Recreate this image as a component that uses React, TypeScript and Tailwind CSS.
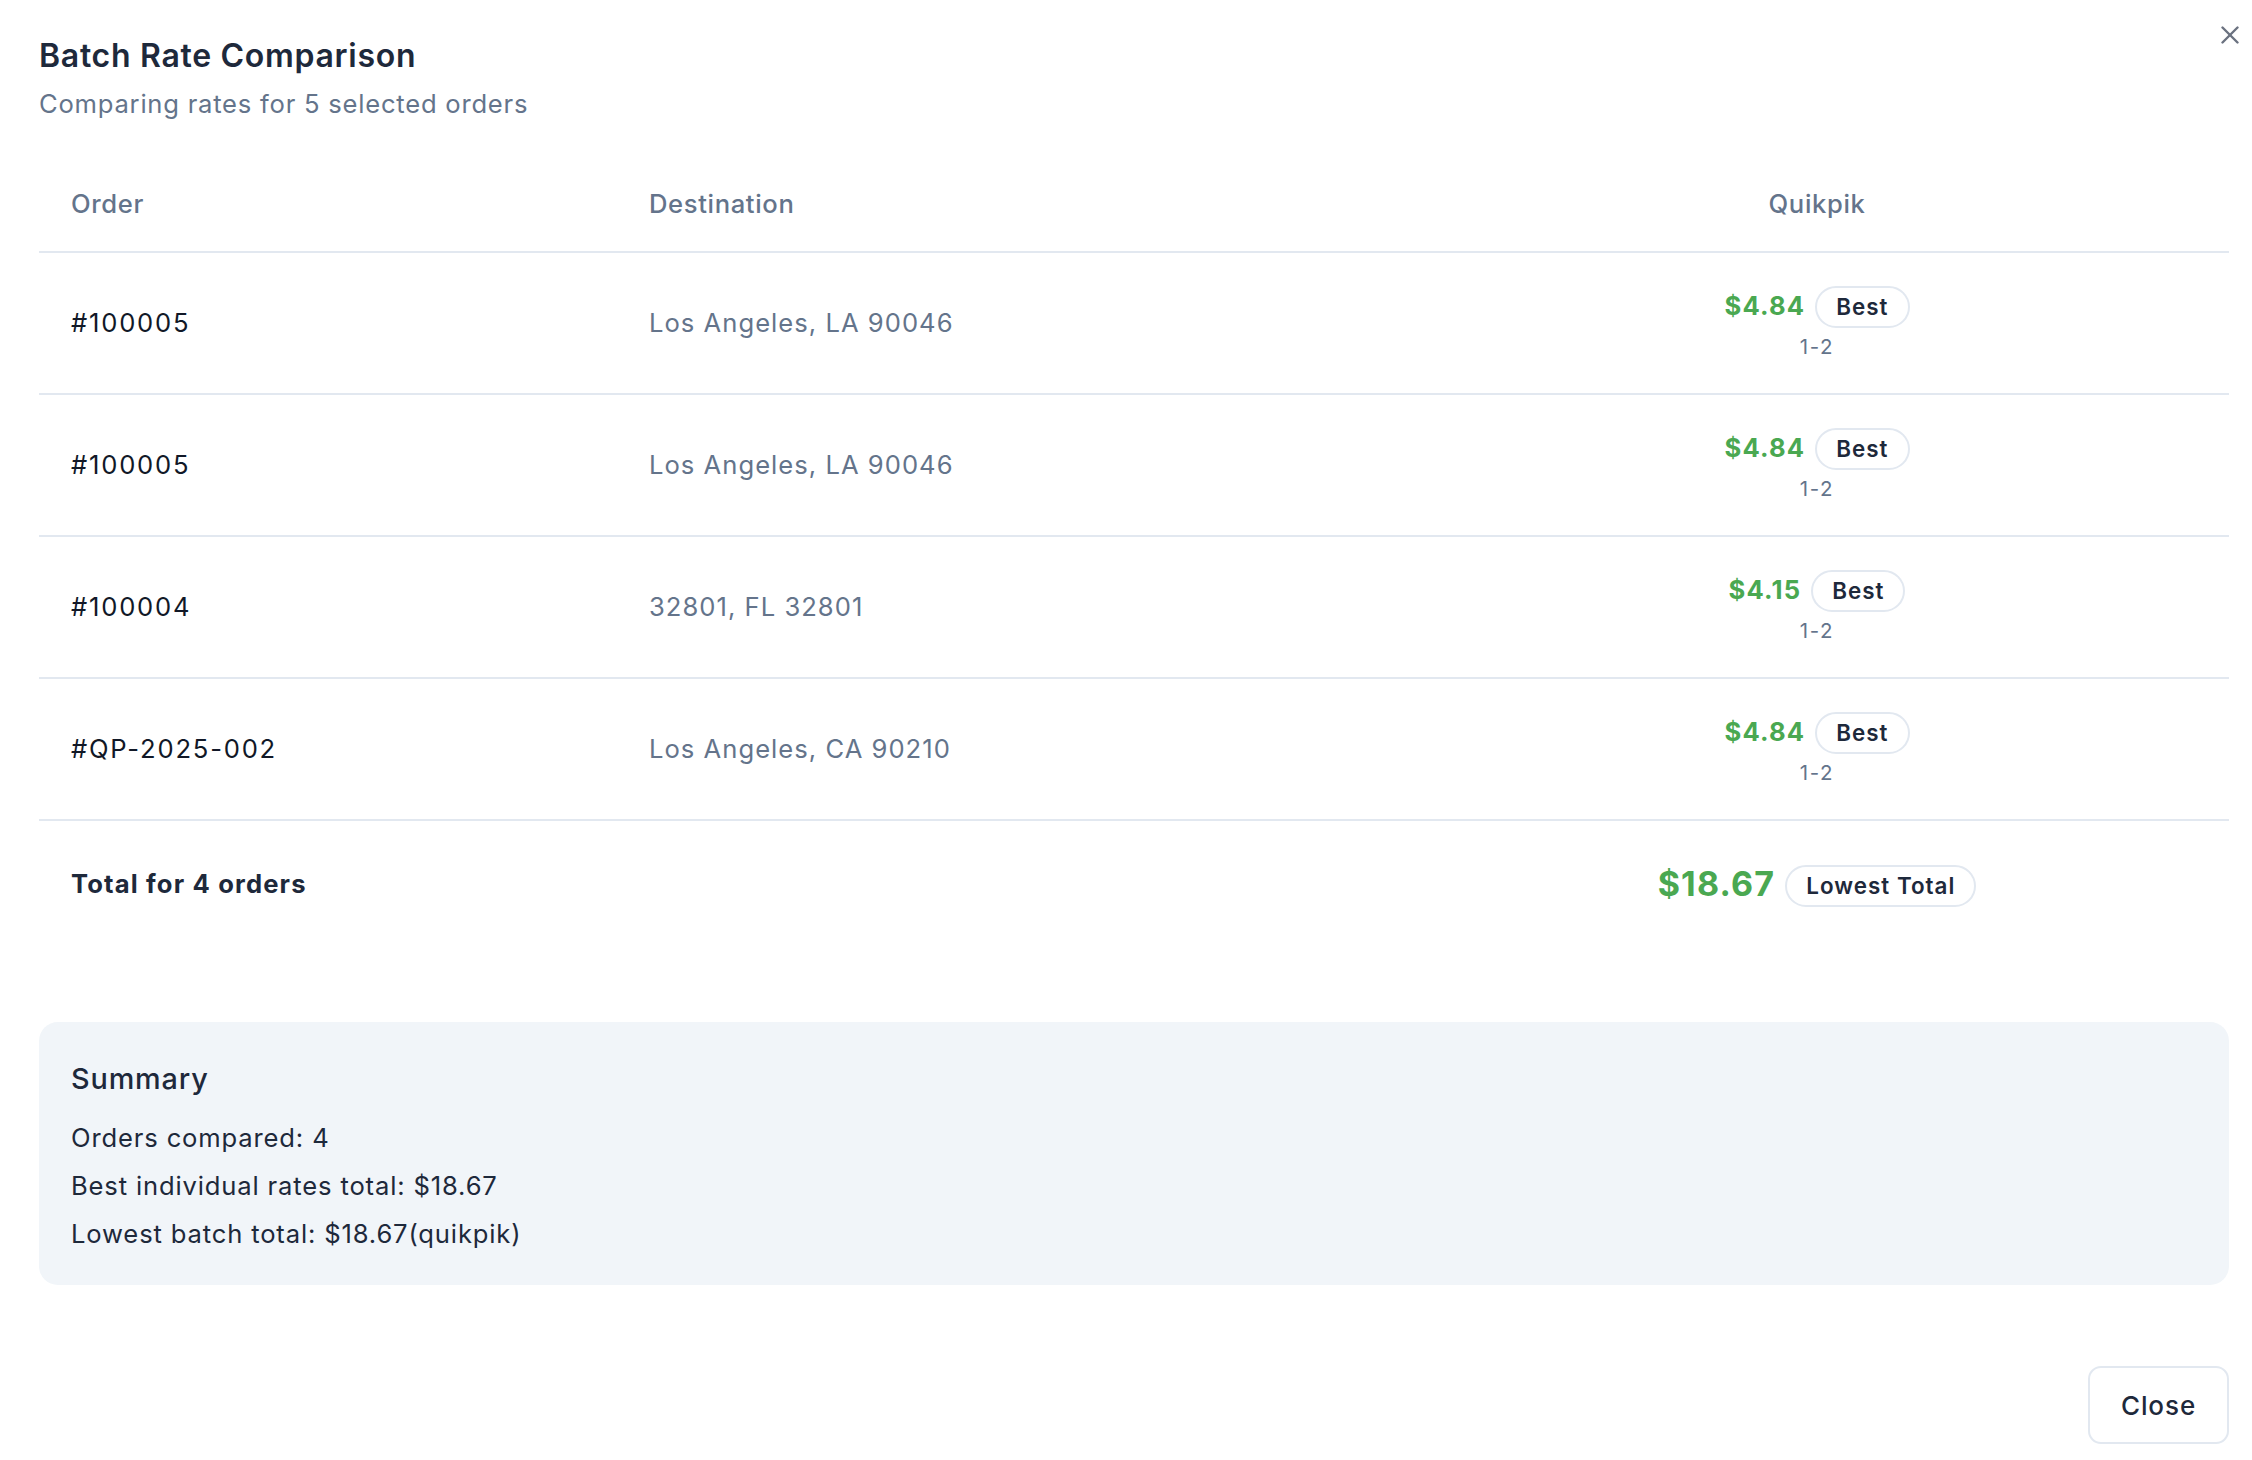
import React from "react";

type Row = { order: string; dest: string; price: string };

const rows: Row[] = [
  { order: "#100005", dest: "Los Angeles, LA 90046", price: "$4.84" },
  { order: "#100005", dest: "Los Angeles, LA 90046", price: "$4.84" },
  { order: "#100004", dest: "32801, FL 32801", price: "$4.15" },
  { order: "#QP-2025-002", dest: "Los Angeles, CA 90210", price: "$4.84" },
];

function Badge({ children }: { children: React.ReactNode }) {
  return (
    <span className="inline-flex h-[42px] items-center rounded-full border-2 border-[#e2e8f0] px-[19px] text-[22.4px] font-semibold tracking-[0.045em] text-[#1e293b]">
      {children}
    </span>
  );
}

export default function App() {
  return (
    <div className="relative flex h-[1460px] w-[2252px] flex-col bg-white pl-[39px] pr-[23px] pt-[32px] font-['Inter','Noto_Sans',sans-serif] tracking-[0.04em] text-[#1e293b]">
      <button className="absolute right-[13px] top-[26px] h-[18px] w-[18px] text-[#6b7280]" aria-label="Close">
        <svg viewBox="0 0 18 18" width="18" height="18" fill="none" stroke="currentColor" strokeWidth="2.4" strokeLinecap="round">
          <path d="M1.5 1.5 L16.5 16.5" />
          <path d="M16.5 1.5 L1.5 16.5" />
        </svg>
      </button>

      <h1 className="h-[48px] text-[32px] font-semibold leading-[48px] tracking-[0.022em] text-[#1e293b]">
        Batch Rate Comparison
      </h1>
      <p className="mt-[5px] h-[38px] text-[25.6px] leading-[38px] tracking-[0.03em] text-[#64748b]">
        Comparing rates for 5 selected orders
      </p>

      <div className="mt-[34px] w-[2190px]">
        <div className="grid h-[96px] grid-cols-[578px_788px_824px] items-center border-b-2 border-[#e2e8f0] text-[25.6px] font-medium text-[#64748b]">
          <div className="pl-[32px]">Order</div>
          <div className="pl-[32px]">Destination</div>
          <div className="text-center">Quikpik</div>
        </div>
        {rows.map((r, i) => (
          <div
            key={i}
            className="grid h-[142px] grid-cols-[578px_788px_824px] items-center border-b-2 border-[#e2e8f0] text-[25.6px]"
          >
            <div className="pl-[32px] font-normal tracking-[0.07em] text-[#111827]">{r.order}</div>
            <div className="pl-[32px] tracking-[0.04em] text-[#64748b]">{r.dest}</div>
            <div className="flex flex-col items-center">
              <div className="flex h-[42px] items-center gap-[10px]">
                <span className="text-[25.6px] font-bold tracking-[0.045em] text-[#4aa851]">{r.price}</span>
                <Badge>Best</Badge>
              </div>
              <div className="mt-[5px] h-[28px] text-[20.5px] leading-[28px] tracking-[0.08em] text-[#64748b]">1-2</div>
            </div>
          </div>
        ))}
        <div className="grid h-[126px] grid-cols-[578px_788px_824px] items-center">
          <div className="pl-[32px] text-[25.6px] font-bold tracking-[0.045em] text-[#1e293b]">Total for 4 orders</div>
          <div />
          <div className="flex items-center justify-center gap-[10px]">
            <span className="text-[34px] font-bold leading-[42px] tracking-[0.035em] text-[#4aa851]">$18.67</span>
            <span className="mt-[3px]">
              <Badge>Lowest Total</Badge>
            </span>
          </div>
        </div>
      </div>

      <div className="mt-[75px] h-[263px] w-[2190px] rounded-[19px] bg-[#f1f5f9] pl-[32px] pt-[36px]">
        <div className="h-[42px] text-[28.8px] font-medium leading-[42px] tracking-[0.03em] text-[#1e293b]">Summary</div>
        <div className="mt-[14px] text-[25.6px] tracking-[0.033em] text-[#1e293b]">
          <div className="h-[48px] leading-[48px]">Orders compared: 4</div>
          <div className="h-[48px] leading-[48px]">Best individual rates total: $18.67</div>
          <div className="h-[48px] leading-[48px]">Lowest batch total: $18.67(quikpik)</div>
        </div>
      </div>

      <div className="mt-[81px] flex w-[2190px] justify-end">
        <button className="h-[78px] w-[141px] rounded-[13px] border-2 border-[#e2e8f0] bg-white text-[26px] font-medium tracking-[0.035em] text-[#1e293b]">
          Close
        </button>
      </div>
    </div>
  );
}
